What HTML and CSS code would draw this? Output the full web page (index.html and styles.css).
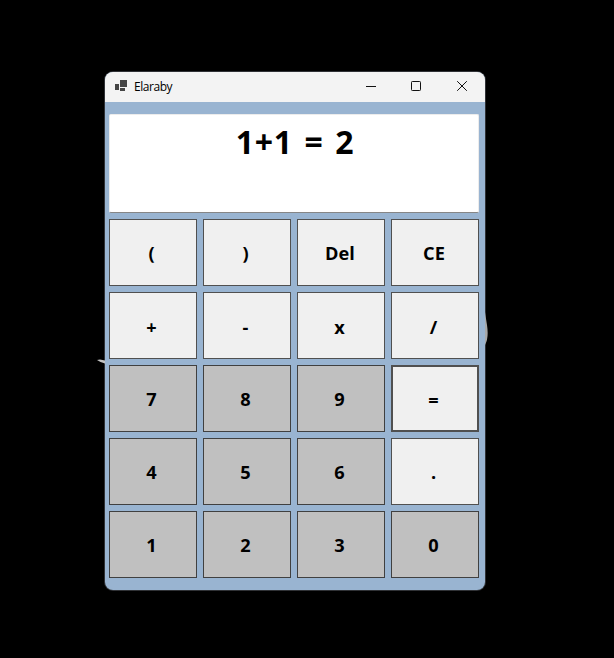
FILE: index.html
```html
<!DOCTYPE html>
<html lang="en">
<head>
<meta charset="utf-8">
<title>Elaraby</title>
<link rel="stylesheet" href="styles.css">
</head>
<body>
<main class="window">
  <svg class="glint glint-left" width="8" height="6" viewBox="0 0 8 6"><path d="M0 2 L3 1.4 L8 2.4 V5.4 Q4 4.9 0 2Z" fill="#c4c4c4"/></svg>
  <svg class="glint glint-right" width="4" height="36" viewBox="0 0 4 36"><path d="M0 2 Q1 9 2 15 Q4 28 0 35Z" fill="#a8a8a8"/></svg>
  <header class="titlebar">
    <svg class="app-icon" width="13" height="12" viewBox="0 0 13 12" shape-rendering="crispEdges" fill="#444"><path d="M0 4h4v6H0zM5 0h7v7H5zM5 8h5v3H5z"/></svg>
    <span class="title">Elaraby</span>
    <svg class="control minimize" width="10" height="10" viewBox="0 0 10 10"><path d="M0 5.5H10" stroke="#111"/></svg>
    <svg class="control" width="10" height="10" viewBox="0 0 10 10"><rect x=".5" y=".5" width="9" height="9" rx=".8" fill="none" stroke="#111"/></svg>
    <svg class="control" width="10" height="10" viewBox="0 0 10 10"><path d="M.2.2 9.8 9.8M9.8.2.2 9.8" stroke="#111"/></svg>
  </header>
  <div class="display"><span class="expression">1+1 = 2</span></div>
  <div class="keys">
    <button class="key">(</button><button class="key">)</button><button class="key word">Del</button><button class="key word">CE</button>
    <button class="key operator">+</button><button class="key operator">-</button><button class="key operator">x</button><button class="key operator">/</button>
    <button class="key digit">7</button><button class="key digit">8</button><button class="key digit">9</button><button class="key operator focused">=</button>
    <button class="key digit">4</button><button class="key digit">5</button><button class="key digit">6</button><button class="key">.</button>
    <button class="key digit">1</button><button class="key digit">2</button><button class="key digit">3</button><button class="key digit">0</button>
  </div>
</main>
</body>
</html>
```

FILE: styles.css
```css
* { box-sizing: border-box; }
body {
  margin: 0;
  padding: 72px 0 0 105px;
  height: 658px;
  background: #000;
  color: #000;
  font-family: "Open Sans", "Noto Sans", sans-serif;
  overflow: hidden;
}
.window {
  position: relative;
  width: 380px;
  height: 518px;
  border-radius: 8px;
  background: #99b4d1;
  box-shadow: 0 0 0 1px #303236;
}
.titlebar {
  display: flex;
  align-items: center;
  height: 30px;
  padding: 0 18px 0 10px;
  border-radius: 8px 8px 0 0;
  background: #f3f3f3;
}
.app-icon { margin-top: -3px; }
.title {
  flex: 1;
  margin: -1px 0 0 6px;
  font-size: 12px;
  letter-spacing: -0.45px;
}
.control { margin: -2px 0 0 36px; }
.minimize { margin-right: -1px; }
.display {
  width: 370px;
  height: 99px;
  margin: 12px 0 0 4px;
  border: 1px solid #ececec;
  border-bottom-color: #868686;
  border-radius: 2px;
  background: #fff;
  text-align: center;
}
.expression {
  padding-left: 2px;
  font-size: 32px;
  font-weight: 700;
  line-height: 54px;
  letter-spacing: 0.6px;
  word-spacing: 3px;
}
.keys {
  display: grid;
  grid-template-columns: repeat(4, 88px);
  grid-auto-rows: 67px;
  gap: 6px;
  margin: 6px 0 0 4px;
}
.key {
  padding: 1px 3px 0 0;
  border: 1px solid #505050;
  border-radius: 0;
  background: #f0f0f0;
  color: #000;
  font: 700 18.2px "Open Sans", "Noto Sans", sans-serif;
}
.operator { padding-top: 2px; }
.word { padding-right: 2px; }
.digit { background: #c0c0c0; border-color: #404040; }
.focused { border-width: 2px; }
.glint { position: absolute; }
.glint-left { left: -8px; top: 286px; }
.glint-right { left: 380px; top: 238px; }
```
